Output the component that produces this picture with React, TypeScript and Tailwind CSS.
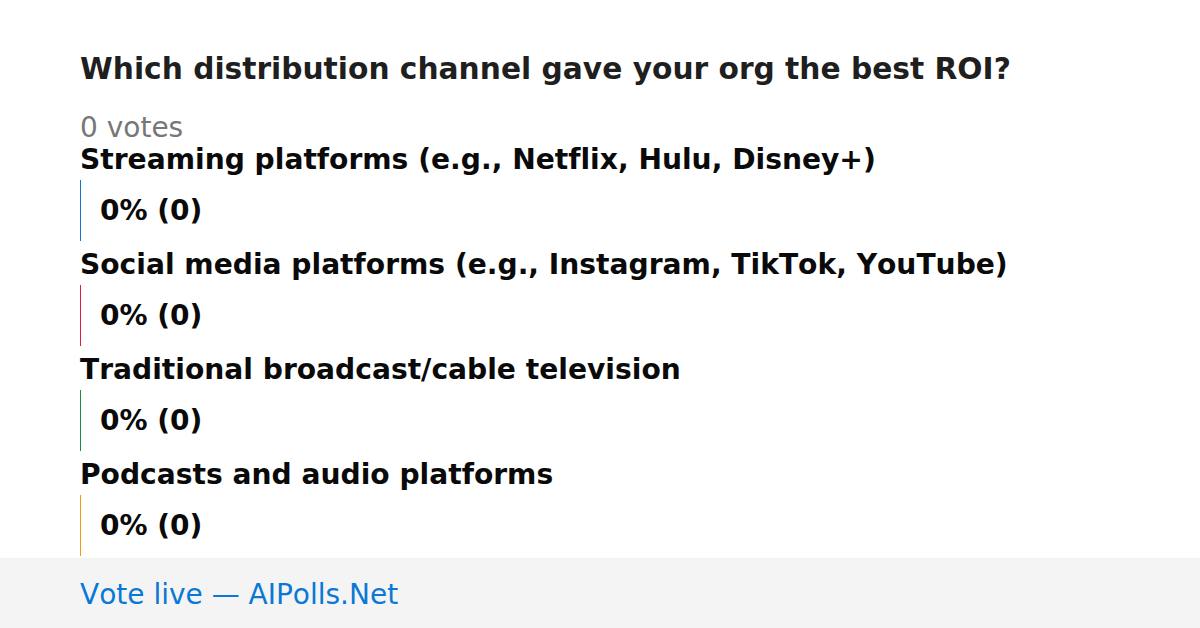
const options = [
  { label: "Streaming platforms (e.g., Netflix, Hulu, Disney+)", bar: "border-[#0a78d4]" },
  { label: "Social media platforms (e.g., Instagram, TikTok, YouTube)", bar: "border-[#e01b3c]" },
  { label: "Traditional broadcast/cable television", bar: "border-[#14913f]" },
  { label: "Podcasts and audio platforms", bar: "border-[#f59a0c]" },
];

export default function App() {
  return (
    <div className="w-[1200px] h-[628px] bg-white flex flex-col overflow-hidden font-['DejaVu_Sans',sans-serif] [font-kerning:none] [font-variant-ligatures:none]">
      <div className="h-[558px] shrink-0 overflow-hidden px-[80px] pt-[51px]">
        <h1 className="text-[29.7px] leading-[36px] font-bold text-[#1f1f1f]">
          Which distribution channel gave your org the best ROI?
        </h1>
        <div className="mt-[25px] text-[28px] leading-[32px] text-[#777777]">0 votes</div>
        <div className="flex flex-col">
          {options.map((o) => (
            <div key={o.label} className="flex flex-col pb-[8px]">
              <div className="text-[28.15px] leading-[32px] font-bold text-[#0a0a0a]">{o.label}</div>
              <div className={`mt-[4px] h-[61px] border-l ${o.bar} pl-[19px] flex items-center`}>
                <span className="text-[28px] leading-[32px] font-bold text-[#0a0a0a]">0% (0)</span>
              </div>
            </div>
          ))}
        </div>
      </div>
      <div className="flex-1 bg-[#f4f4f4] px-[80px] pt-[21px]">
        <span className="text-[28px] leading-[32px] text-[#0a78d4]">Vote live — AIPolls.Net</span>
      </div>
    </div>
  );
}
